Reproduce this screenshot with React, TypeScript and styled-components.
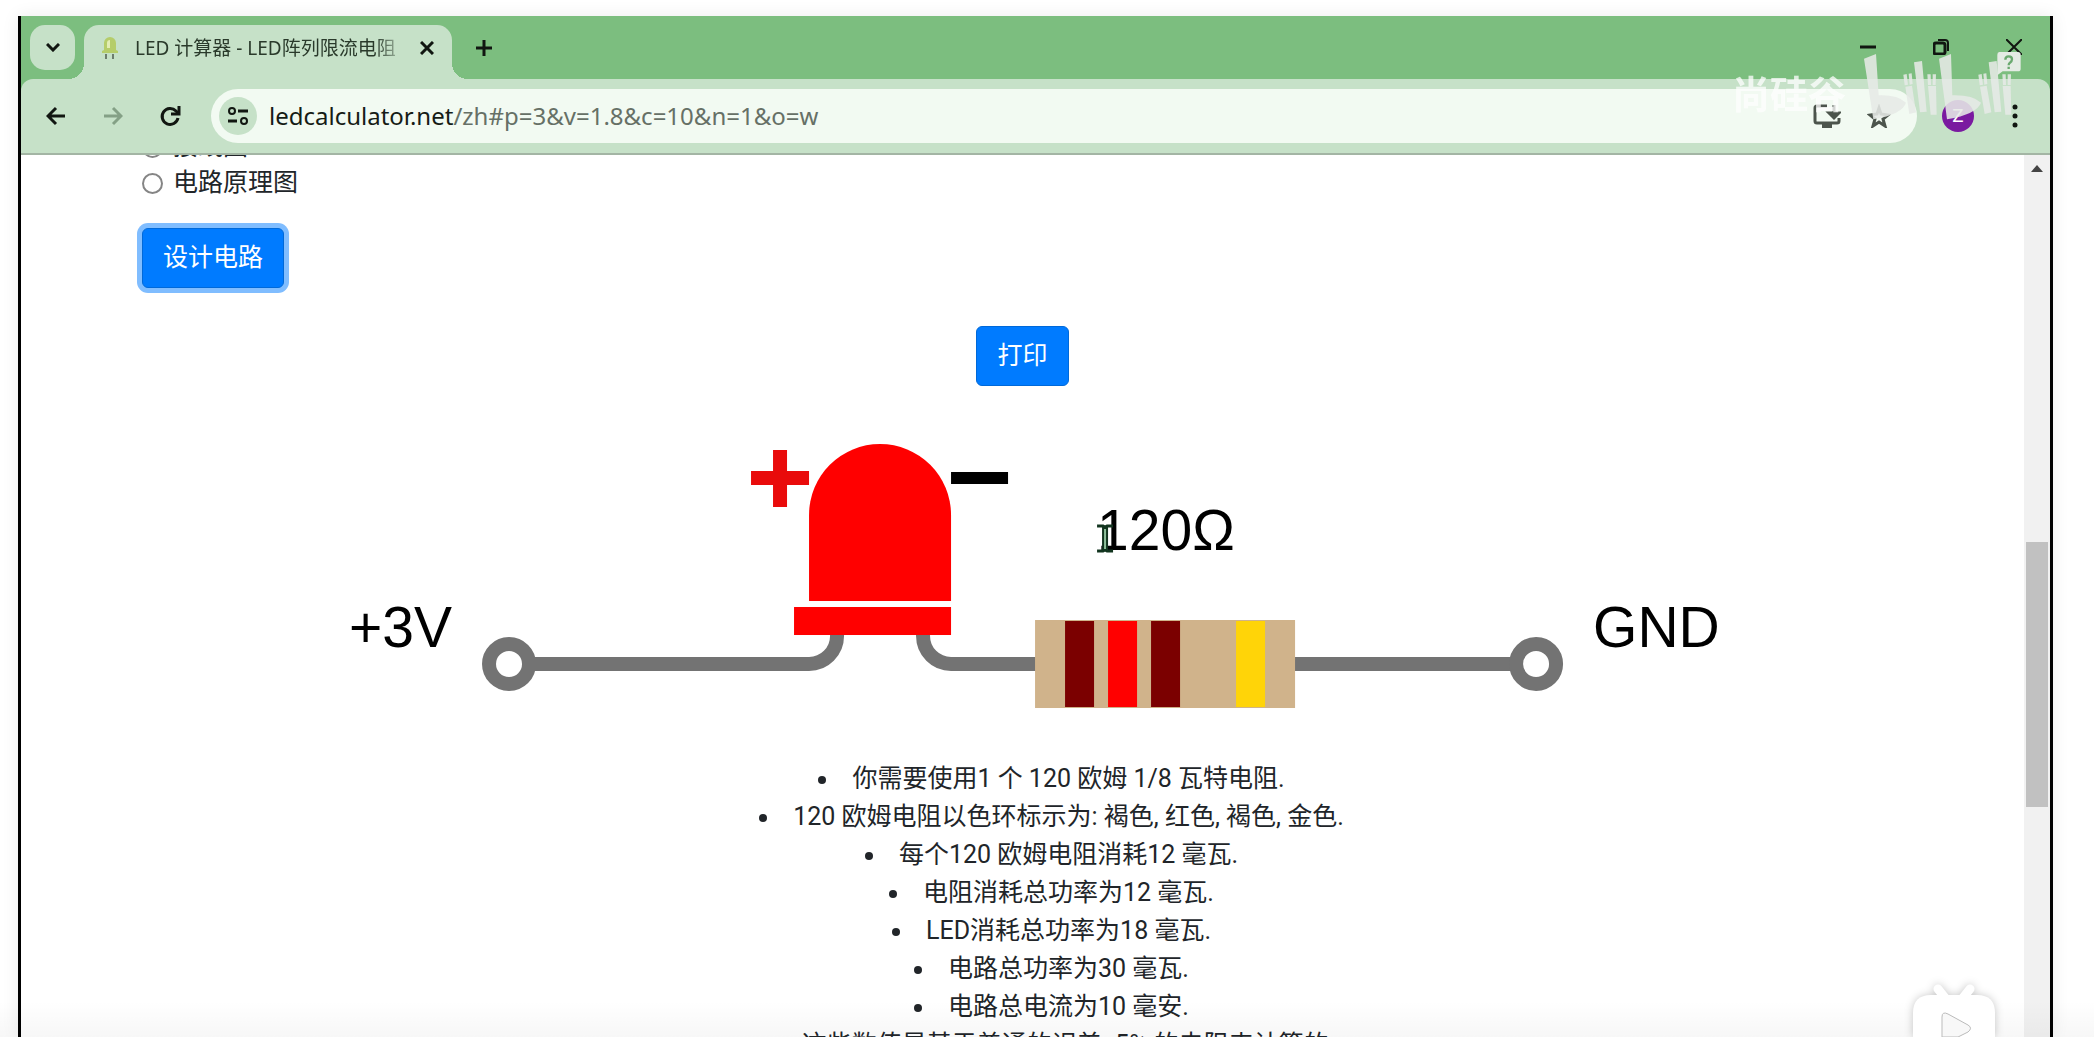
import React from "react";
import styled, { createGlobalStyle } from "styled-components";

const uiFont = `"Noto Sans", "Noto Sans CJK SC", sans-serif`;
const pageFont = `Roboto, "Noto Sans CJK SC", sans-serif`;
const chrome = {
  strip: "#7cbe7f",
  bar: "#c6e1c8",
  field: "#f2faf2",
  ink: "#111611",
};

const GlobalStyle = createGlobalStyle`
  *, *::before, *::after { box-sizing: border-box; }
  body { margin: 0; background: #fff; }
  button { font: inherit; cursor: pointer; }
`;

const Stage = styled.div`
  position: relative;
  display: flex;
  height: 100vh;
  padding: 16px 41px 0 18px;
  overflow: hidden;
`;

const Window = styled.div`
  flex: 1;
  min-width: 0;
  display: flex;
  flex-direction: column;
  border: solid #000;
  border-width: 0 3px;
  background: ${chrome.strip};
  box-shadow: 0 0 16px rgba(0, 0, 0, 0.08);
`;

const TabStrip = styled.div`
  display: flex;
  align-items: flex-start;
  height: 63px;
  padding: 9px 16px 0 9px;
`;

const IconButton = styled.button<{ $w?: number; $h?: number; $bg?: string; $round?: number }>`
  flex: none;
  display: flex;
  align-items: center;
  justify-content: center;
  width: ${(p) => p.$w ?? 40}px;
  height: ${(p) => p.$h ?? 40}px;
  padding: 0;
  border: 0;
  border-radius: ${(p) => p.$round ?? 0}px;
  background: ${(p) => p.$bg ?? "transparent"};
  color: ${chrome.ink};
`;

const Tab = styled.div`
  position: relative;
  display: flex;
  align-items: center;
  width: 368px;
  height: 54px;
  margin-left: 9px;
  padding: 0 5px 8px 17px;
  border-radius: 15px 15px 0 0;
  background: ${chrome.bar};

  &::before, &::after {
    content: "";
    position: absolute;
    bottom: 0;
    width: 16px;
    height: 16px;
  }
  &::before {
    right: 100%;
    background: radial-gradient(circle at 0 0, transparent 16px, ${chrome.bar} 16px);
  }
  &::after {
    left: 100%;
    background: radial-gradient(circle at 100% 0, transparent 16px, ${chrome.bar} 16px);
  }
`;

const TabTitle = styled.span`
  flex: 1;
  min-width: 0;
  margin-left: 16px;
  overflow: hidden;
  white-space: nowrap;
  font: 19px/28px ${uiFont};
  color: #2a3a2b;
  mask-image: linear-gradient(to right, #000 240px, transparent 272px);
`;

const WindowControls = styled.div`
  display: flex;
  margin-left: auto;
  padding-top: 2px;
  gap: 33px;
`;

const Toolbar = styled.div`
  display: flex;
  align-items: center;
  height: 76px;
  padding: 0 15px 0;
  border-bottom: 2px solid #a3b5a4;
  border-radius: 12px 12px 0 0;
  background: ${chrome.bar};
`;

const NavButtons = styled.div`
  display: flex;
  gap: 17px;
`;

const Omnibox = styled.div`
  flex: 1;
  min-width: 0;
  display: flex;
  align-items: center;
  height: 54px;
  margin-left: 21px;
  padding: 0 18px 0 8px;
  gap: 12px;
  border-radius: 27px;
  background: ${chrome.field};
`;

const Address = styled.div`
  flex: 1;
  min-width: 0;
  font: 24px/32px ${uiFont};
  white-space: nowrap;
  color: #667066;

  b { font-weight: 400; color: #161c16; }
`;

const Avatar = styled.button`
  flex: none;
  width: 32px;
  height: 32px;
  margin: 0 21px 0 25px;
  padding: 0;
  border: 0;
  border-radius: 50%;
  background: #7a1aa0;
  color: #fff;
  && { font: 19px/32px ${pageFont}; }
`;

const Viewport = styled.div`
  flex: 1;
  min-height: 0;
  display: flex;
  background: #fff;
`;

const Page = styled.main`
  flex: 1;
  min-width: 0;
  overflow: hidden;
  font: 25px/38px ${pageFont};
  color: #212529;
`;

const Scrolled = styled.div`
  display: flex;
  flex-direction: column;
  align-items: center;
  margin-top: -26px;
`;

const Form = styled.form`
  align-self: stretch;
  padding-left: 121px;
`;

const Option = styled.label`
  display: flex;
  align-items: center;
  gap: 10px;
  line-height: 36px;
`;

const Radio = styled.input`
  appearance: none;
  width: 21px;
  height: 21px;
  margin: 0;
  border: 2px solid #858585;
  border-radius: 50%;
  background: #fff;
  &:checked { box-shadow: inset 0 0 0 4px #fff; background: #0075ff; border-color: #0075ff; }
`;

const PrimaryButton = styled.button<{ $focused?: boolean; $top: number }>`
  display: block;
  height: 60px;
  margin-top: ${(p) => p.$top}px;
  padding: 0 20px;
  border: 1px solid #0069d9;
  border-radius: 6px;
  background: #007bff;
  color: #fff;
  box-shadow: ${(p) => (p.$focused ? "0 0 0 5px #80bdff" : "none")};
`;

const Diagram = styled.svg`
  display: block;
  width: 70%;
  height: auto;
  margin-top: 44px;
`;

const Notes = styled.ul`
  align-self: stretch;
  margin: 40px 0 0;
  padding: 0 0 0 58px;
  list-style: disc inside;
  text-align: center;
`;

const Scrollbar = styled.div`
  flex: none;
  width: 26px;
  padding: 0 2px;
  background: #f1f1f1;
`;

const Thumb = styled.div`
  height: 265px;
  margin-top: 361px;
  background: #c1c1c1;
`;

const Watermark = styled.div`
  position: absolute;
  top: 40px;
  right: 50px;
  display: flex;
  align-items: flex-start;
  gap: 18px;
  color: #fff;
  pointer-events: none;
`;

const WatermarkName = styled.span`
  padding-top: 30px;
  font: 700 38px/44px "Noto Sans CJK SC", sans-serif;
  opacity: 0.75;
`;

const PlayerBadge = styled.svg`
  position: absolute;
  right: 90px;
  bottom: 0;
  filter: drop-shadow(0 0 4px rgba(0, 0, 0, 0.22));
`;

const BottomShade = styled.div`
  position: absolute;
  inset: auto 0 0 0;
  height: 36px;
  background: linear-gradient(transparent, rgba(0, 0, 0, 0.03));
  pointer-events: none;
`;

const line = { fill: "none", stroke: "currentColor", strokeWidth: 3 };

const LedFavicon = () => (
  <svg width="18" height="24" viewBox="0 0 18 24">
    <path d="M3 14V7a6 6 0 0 1 12 0v7l2 1v2H1v-2z" fill="#b5cd6a" />
    <path d="M6 12V7a3 3 0 0 1 3-3v8z" fill="#e2edb4" />
    <path d="M5 18v5M12 18v5" stroke="#6d7d6d" strokeWidth="2" />
  </svg>
);

const CircuitDiagram = () => (
  <Diagram viewBox="0 0 1402 290" role="img" aria-label="LED 电路接线图">
    <g fill="none" stroke="#737373" strokeWidth="14">
      <circle cx="188" cy="234" r="20" />
      <path d="M207 234H488A28 28 0 0 0 516 206V200" />
      <path d="M602 200V206A28 28 0 0 0 630 234H716" />
      <path d="M972 234H1196" />
      <circle cx="1215" cy="234" r="20" />
    </g>
    <g fill="#f00">
      <path d="M488 171V85a71 71 0 0 1 142 0v86z" />
      <rect x="473" y="177" width="157" height="28" />
    </g>
    <path d="M430 41h22v-21h14v21h22v14h-22v22h-14v-22h-22z" fill="#e90b0b" />
    <rect x="630" y="42" width="57" height="12" />
    <rect x="714" y="190" width="260" height="88" fill="#d0b38b" />
    <rect x="744" y="191" width="29" height="86" fill="#7b0000" />
    <rect x="787" y="191" width="29" height="86" fill="#f00" />
    <rect x="830" y="191" width="29" height="86" fill="#7b0000" />
    <rect x="915" y="191" width="29" height="86" fill="#ffd408" />
    <g fontFamily="'Liberation Sans', Arial, sans-serif" fontSize="57" fill="#000">
      <text x="28" y="217">+3V</text>
      <text x="776" y="120">120Ω</text>
      <text x="1272" y="217">GND</text>
    </g>
    <g fill="#fff" stroke="#12351f" strokeWidth="2">
      <path d="M776 96h6l2 1 2-1h6M776 121h6l2-1 2 1h6" strokeWidth="3" />
      <path d="M782 98h4v22h-4z" fill="#8fc09b" />
    </g>
  </Diagram>
);

const BrandMark = () => (
  <svg width="180" height="80" viewBox="432 0 540 240">
    <g fill="#e6e9e6" fillOpacity="0.88">
      <path d="M432 56l36-14 8 124q56-2 82 22-10 34-98 50z" />
      <path d="M657 56l36-14 4 124q60-2 86 22-12 34-102 50z" />
      <path d="M582 67l24-4 14 152-20 2zM806 67l24-4 14 152-20 2z" />
      <path d="M556 140l20-3 12 80-20 5zM780 140l20-3 14 80-20 5zM624 138h24l2 86h-18zM848 138h24l2 86h-18z" />
      <path d="M550 104l10-2 4 32-10 2zM566 101l9-1 3 32-9 2zM775 104l10-2 4 32-10 2zM790 101l9-1 3 32-9 2z" />
      <path d="M622 103h10l1 32h-9zM638 103h10l-1 32h-9zM847 103h10l1 32h-9zM863 103h10l-1 32h-9z" />
    </g>
    <path d="M838 36h56q8 0 8 8v42q0 8-8 8h-46l-16 12V44q0-8 6-8z" fill="#e4ebe4" />
    <path d="M856 59q0-10 10-10t10 9q0 6-6 10-4 3-4 8M866 80v7" fill="none" stroke="#6aa96f" strokeWidth="7" />
  </svg>
);

const notes = [
  "你需要使用1 个 120 欧姆 1/8 瓦特电阻.",
  "120 欧姆电阻以色环标示为: 褐色, 红色, 褐色, 金色.",
  "每个120 欧姆电阻消耗12 毫瓦.",
  "电阻消耗总功率为12 毫瓦.",
  "LED消耗总功率为18 毫瓦.",
  "电路总功率为30 毫瓦.",
  "电路总电流为10 毫安.",
  "这些数值是基于普通的误差±5% 的电阻来计算的.",
];

export default function App() {
  return (
    <Stage>
      <GlobalStyle />
      <Window>
        <TabStrip>
          <IconButton $w={45} $h={45} $bg={chrome.bar} $round={15} aria-label="搜索标签页">
            <svg width="14" height="9" viewBox="0 0 14 9" {...line}><path d="M1 1l6 6 6-6" /></svg>
          </IconButton>
          <Tab>
            <LedFavicon />
            <TabTitle>LED 计算器 - LED阵列限流电阻</TabTitle>
            <IconButton $h={30} aria-label="关闭标签页">
              <svg width="14" height="14" viewBox="0 0 14 14" {...line}><path d="M1 1l12 12M13 1L1 13" /></svg>
            </IconButton>
          </Tab>
          <IconButton $w={64} $h={45} aria-label="新标签页">
            <svg width="16" height="16" viewBox="0 0 16 16" {...line}><path d="M8 0v16M0 8h16" /></svg>
          </IconButton>
          <WindowControls>
            <IconButton aria-label="最小化">
              <svg width="16" height="16" viewBox="0 0 16 16" {...line}><path d="M0 8h16" /></svg>
            </IconButton>
            <IconButton aria-label="还原">
              <svg width="16" height="16" viewBox="0 0 16 16" {...line} strokeWidth={2}>
                <rect x="1" y="4" width="11" height="11" rx="2" strokeWidth="3" />
                <path d="M5 1h7a3 3 0 0 1 3 3v8" />
              </svg>
            </IconButton>
            <IconButton aria-label="关闭">
              <svg width="16" height="16" viewBox="0 0 16 16" {...line} strokeWidth={2}><path d="M0 0l16 16M16 0L0 16" /></svg>
            </IconButton>
          </WindowControls>
        </TabStrip>

        <Toolbar>
          <NavButtons>
            <IconButton aria-label="后退">
              <svg width="20" height="20" viewBox="0 0 20 20" {...line}><path d="M19 10H2M10 2l-8 8 8 8" /></svg>
            </IconButton>
            <IconButton aria-label="前进" disabled>
              <svg width="20" height="20" viewBox="0 0 20 20" {...line} stroke="#84a086"><path d="M1 10h17M10 2l8 8-8 8" /></svg>
            </IconButton>
            <IconButton aria-label="重新加载">
              <svg width="22" height="22" viewBox="0 0 22 22" {...line}>
                <path d="M19 13A8 8 0 1 1 17 6l2 2" /><path d="M20 1v8h-8" />
              </svg>
            </IconButton>
          </NavButtons>
          <Omnibox>
            <IconButton $w={38} $h={38} $round={19} $bg={chrome.bar} aria-label="网站信息">
              <svg width="20" height="18" viewBox="0 0 20 18" {...line}>
                <circle cx="4" cy="4" r="3" strokeWidth="2" /><path d="M10 4h10M0 14h9" />
                <circle cx="16" cy="14" r="3" strokeWidth="2" />
              </svg>
            </IconButton>
            <Address><b>ledcalculator.net</b>/zh#p=3&amp;v=1.8&amp;c=10&amp;n=1&amp;o=w</Address>
            <IconButton aria-label="安装">
              <svg width="28" height="24" viewBox="0 0 28 24" {...line} stroke="#4c544c">
                <path d="M14 2H4a2 2 0 0 0-2 2v13a2 2 0 0 0 2 2h20a2 2 0 0 0 2-2v-3" />
                <path d="M9 22h10" strokeWidth="4" /><path d="M21 1v9M16 9l5 5 5-5z" fill="#4c544c" />
              </svg>
            </IconButton>
            <IconButton aria-label="加入书签">
              <svg width="24" height="24" viewBox="0 0 24 24" fill="none" stroke="#4c544c" strokeWidth="3">
                <path d="M12 4l2 6 7 1-5 4 2 7-6-4-6 4 2-7-5-4 7-1z" />
              </svg>
            </IconButton>
          </Omnibox>
          <Avatar aria-label="个人资料">Z</Avatar>
          <IconButton aria-label="菜单">
            <svg width="6" height="24" viewBox="0 0 6 24" fill={chrome.ink}>
              <circle cx="3" cy="3" r="2.5" /><circle cx="3" cy="12" r="2.5" /><circle cx="3" cy="21" r="2.5" />
            </svg>
          </IconButton>
        </Toolbar>

        <Viewport>
          <Page>
            <Scrolled>
              <Form onSubmit={(e) => e.preventDefault()}>
                <Option><Radio type="radio" name="output" value="w" />接线图</Option>
                <Option><Radio type="radio" name="output" value="s" />电路原理图</Option>
                <PrimaryButton $focused $top={27} type="submit">设计电路</PrimaryButton>
              </Form>
              <PrimaryButton $top={38} type="button">打印</PrimaryButton>
              <CircuitDiagram />
              <Notes>
                {notes.map((n) => <li key={n}>{n}</li>)}
              </Notes>
            </Scrolled>
          </Page>
          <Scrollbar>
            <IconButton $w={22} $h={26} aria-label="向上滚动">
              <svg width="12" height="7" viewBox="0 0 12 7" fill="#444"><path d="M0 7l6-7 6 7z" /></svg>
            </IconButton>
            <Thumb />
          </Scrollbar>
        </Viewport>
      </Window>

      <BottomShade />
      <Watermark>
        <WatermarkName>尚硅谷</WatermarkName>
        <BrandMark />
      </Watermark>
      <PlayerBadge width="100" height="60" viewBox="0 0 100 60" aria-hidden="true">
        <path d="M34 12l8 10M66 12l-8 10" stroke="#fff" strokeWidth="9" strokeLinecap="round" />
        <path d="M9 60V36q0-18 18-18h46q18 0 18 18v24z" fill="#fff" />
        <path d="M38 60V40q0-6 6-3l20 11q5 3 0 7l-10 5z" fill="#f8f8f8" stroke="#bbb" strokeWidth="1" />
      </PlayerBadge>
    </Stage>
  );
}
